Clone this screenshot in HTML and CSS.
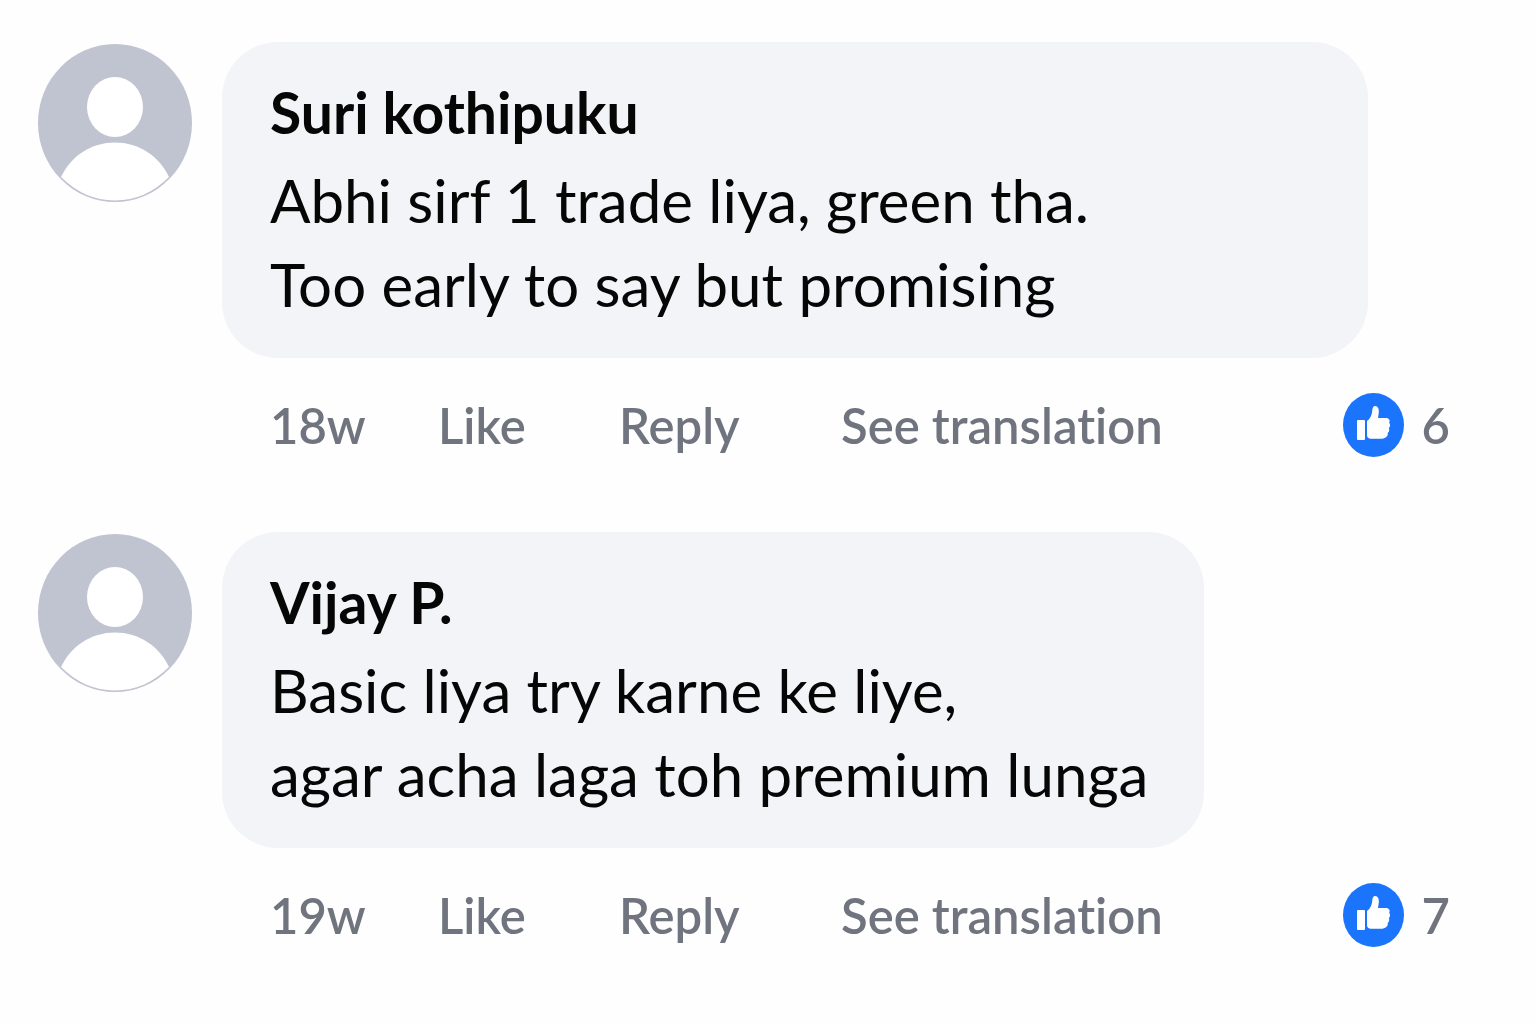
FILE: index.html
```html
<!DOCTYPE html>
<html lang="en">
<head>
<meta charset="utf-8">
<meta name="viewport" content="width=device-width, initial-scale=1">
<title>Comments</title>
<link rel="stylesheet" href="styles.css">
</head>
<body>
<svg width="0" height="0" class="defs" aria-hidden="true">
    <symbol id="avatar" viewBox="0 0 154 158">
        <ellipse cx="77" cy="79" rx="77" ry="79" fill="#c0c3d0"/>
        <ellipse cx="77" cy="63" rx="28" ry="30" fill="#fff"/>
        <path d="M23 133C33 112 53 98.500 77 98.500s44 13.500 54 34.500c-15 15-33 23.500-54 23.500s-39-8.500-54-23.500z" fill="#fff"/>
    </symbol>
    <symbol id="thumb" viewBox="0 0 61 64">
        <ellipse cx="30.500" cy="32" rx="30.500" ry="32" fill="#1b74fc"/>
        <rect x="14" y="27" width="8" height="20" rx="1" fill="#fff"/>
        <path d="M24 28c3-2 5-6 5.200-10 .1-3 1-5 2.800-5 3 0 4.200 3 3.800 6.500L35 25h8c3 0 4.500 2.500 3.200 4.700 1.300 1.800 1.200 4-.4 5.300.9 1.900.4 3.900-1.100 5 .5 2.300-.7 4-3 5-1 .5-2 .7-3.500.7H28c-2.500 0-4-1.500-4-3.500z" fill="#fff"/>
    </symbol>
</svg>
<main class="comments">
    <article class="comment">
        <svg class="avatar" aria-hidden="true"><use href="#avatar"/></svg>
        <div class="body">
            <div class="bubble bubble-wide">
                <h2 class="name">Suri kothipuku</h2>
                <p class="text">Abhi sirf 1 trade liya, green tha.<br>Too early to say but promising</p>
            </div>
            <div class="actions">
                <span class="time">18w</span>
                <button type="button">Like</button>
                <button type="button">Reply</button>
                <button type="button">See translation</button>
                <span class="likes"><svg class="thumb" aria-hidden="true"><use href="#thumb"/></svg>6</span>
            </div>
        </div>
    </article>
    <article class="comment">
        <svg class="avatar" aria-hidden="true"><use href="#avatar"/></svg>
        <div class="body">
            <div class="bubble">
                <h2 class="name">Vijay P.</h2>
                <p class="text">Basic liya try karne ke liye,<br>agar acha laga toh premium lunga</p>
            </div>
            <div class="actions">
                <span class="time">19w</span>
                <button type="button">Like</button>
                <button type="button">Reply</button>
                <button type="button">See translation</button>
                <span class="likes"><svg class="thumb" aria-hidden="true"><use href="#thumb"/></svg>7</span>
            </div>
        </div>
    </article>
</main>
</body>
</html>
```
FILE: styles.css
```css
*{
    margin: 0;
    padding: 0;
    box-sizing: border-box;
}
body{
    background-color: #fefefe;
    color: #060606;
    font-family: Lato, "Liberation Sans", sans-serif;
    font-variant-ligatures: none;
}
.defs{
    display: block;
}
.comments{
    display: flex;
    flex-direction: column;
    gap: 75px;
    padding: 42px 86px 72px 38px;
}
.comment{
    display: flex;
    align-items: flex-start;
    gap: 30px;
}
.avatar{
    flex: none;
    width: 154px;
    height: 158px;
    margin-top: 2px;
}
.body{
    flex: 1;
}
.bubble{
    width: fit-content;
    padding: 28px 56px 32px 48px;
    border-radius: 56px;
    background-color: #f3f4f7;
}
.bubble-wide{
    width: auto;
    margin-right: 82px;
}
.name{
    margin-bottom: 4px;
    font-size: 57px;
    line-height: 84px;
    font-weight: 700;
}
.text{
    font-size: 60px;
    line-height: 84px;
}
.actions{
    display: grid;
    grid-template-columns: 168px 181px 222px 1fr auto;
    align-items: center;
    margin-top: 35px;
    padding-left: 48px;
    color: #70747f;
    font-size: 49px;
    line-height: 64px;
    font-weight: 600;
}
.actions button{
    border: 0;
    background: none;
    color: inherit;
    font: inherit;
    font-variant-ligatures: none;
    text-align: left;
    cursor: pointer;
}
.likes{
    display: flex;
    align-items: center;
    gap: 18px;
}
.thumb{
    width: 61px;
    height: 64px;
}
```
